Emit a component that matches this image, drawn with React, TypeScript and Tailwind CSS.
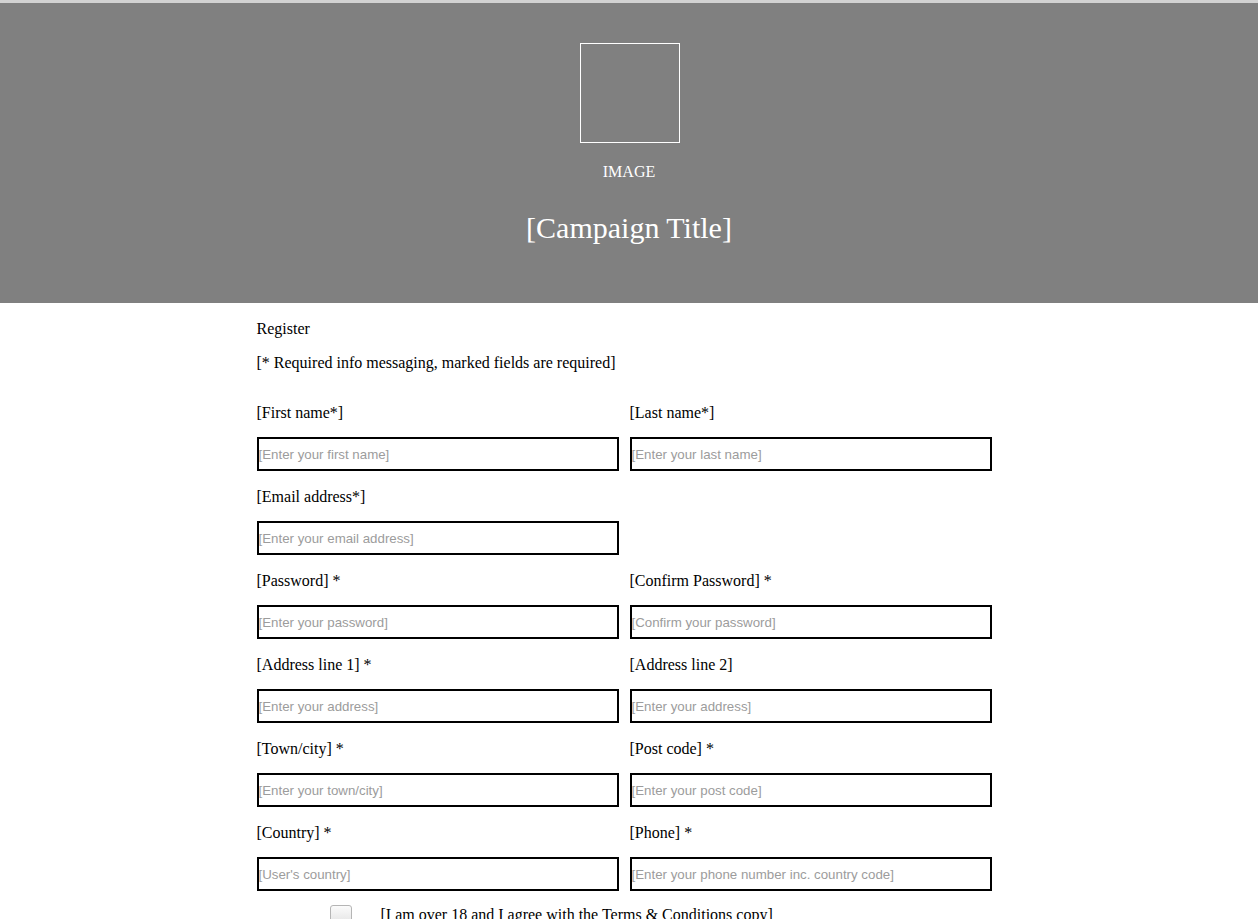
const serif = { fontFamily: '"Liberation Serif", "Times New Roman", serif' }

type Field = { label: string; placeholder: string }

const rows: (Field | null)[][] = [
  [
    { label: '[First name*]', placeholder: '[Enter your first name]' },
    { label: '[Last name*]', placeholder: '[Enter your last name]' },
  ],
  [{ label: '[Email address*]', placeholder: '[Enter your email address]' }, null],
  [
    { label: '[Password] *', placeholder: '[Enter your password]' },
    { label: '[Confirm Password] *', placeholder: '[Confirm your password]' },
  ],
  [
    { label: '[Address line 1] *', placeholder: '[Enter your address]' },
    { label: '[Address line 2]', placeholder: '[Enter your address]' },
  ],
  [
    { label: '[Town/city] *', placeholder: '[Enter your town/city]' },
    { label: '[Post code] *', placeholder: '[Enter your post code]' },
  ],
  [
    { label: '[Country] *', placeholder: "[User's country]" },
    { label: '[Phone] *', placeholder: '[Enter your phone number inc. country code]' },
  ],
]

function FormField({ field }: { field: Field | null }) {
  if (!field) return <div />
  return (
    <div className="flex flex-col">
      <label className="pt-[1px] text-[16px] leading-[18px] text-black">{field.label}</label>
      <input
        className="mt-[15px] h-[34px] border-2 border-black px-0 text-[13.3px] outline-none placeholder:text-[#9c9c9c]"
        style={{ fontFamily: '"Liberation Sans", Arial, sans-serif' }}
        placeholder={field.placeholder}
      />
    </div>
  )
}

export default function App() {
  return (
    <div className="min-h-[919px] bg-white" style={serif}>
      <div className="h-[3px] bg-[#d2d2d2]" />
      <header className="flex h-[300px] flex-col items-center bg-[#808080] pt-10 text-white">
        <div className="ml-[2px] h-[100px] w-[100px] border border-white" />
        <p className="mt-[20px] text-[16px] leading-[18px]">IMAGE</p>
        <h1 className="mt-[30px] text-[30px] leading-[34px]">[Campaign Title]</h1>
      </header>

      <main className="mx-auto w-[745px] pt-[17px] pr-[10px]">
        <p className="text-[16px] leading-[18px]">Register</p>
        <p className="mt-4 text-[16px] leading-[18px]">
          [* Required info messaging, marked fields are required]
        </p>

        <div className="mt-[31px] flex flex-col gap-4">
          {rows.map((row, i) => (
            <div key={i} className="grid grid-cols-2 gap-[11px]">
              {row.map((f, j) => (
                <FormField key={j} field={f} />
              ))}
            </div>
          ))}
        </div>

        <div className="mt-[14px] flex items-center pl-[73px]">
          <span className="h-[20px] w-[22px] shrink-0 rounded-[3px] border border-[#b5b5b5] bg-gradient-to-b from-[#fbfbfb] to-[#e3e3e3]" />
          <span className="ml-[29px] text-[16px] leading-[18px]">
            [I am over 18 and I agree with the Terms &amp; Conditions copy]
          </span>
        </div>
      </main>
    </div>
  )
}
